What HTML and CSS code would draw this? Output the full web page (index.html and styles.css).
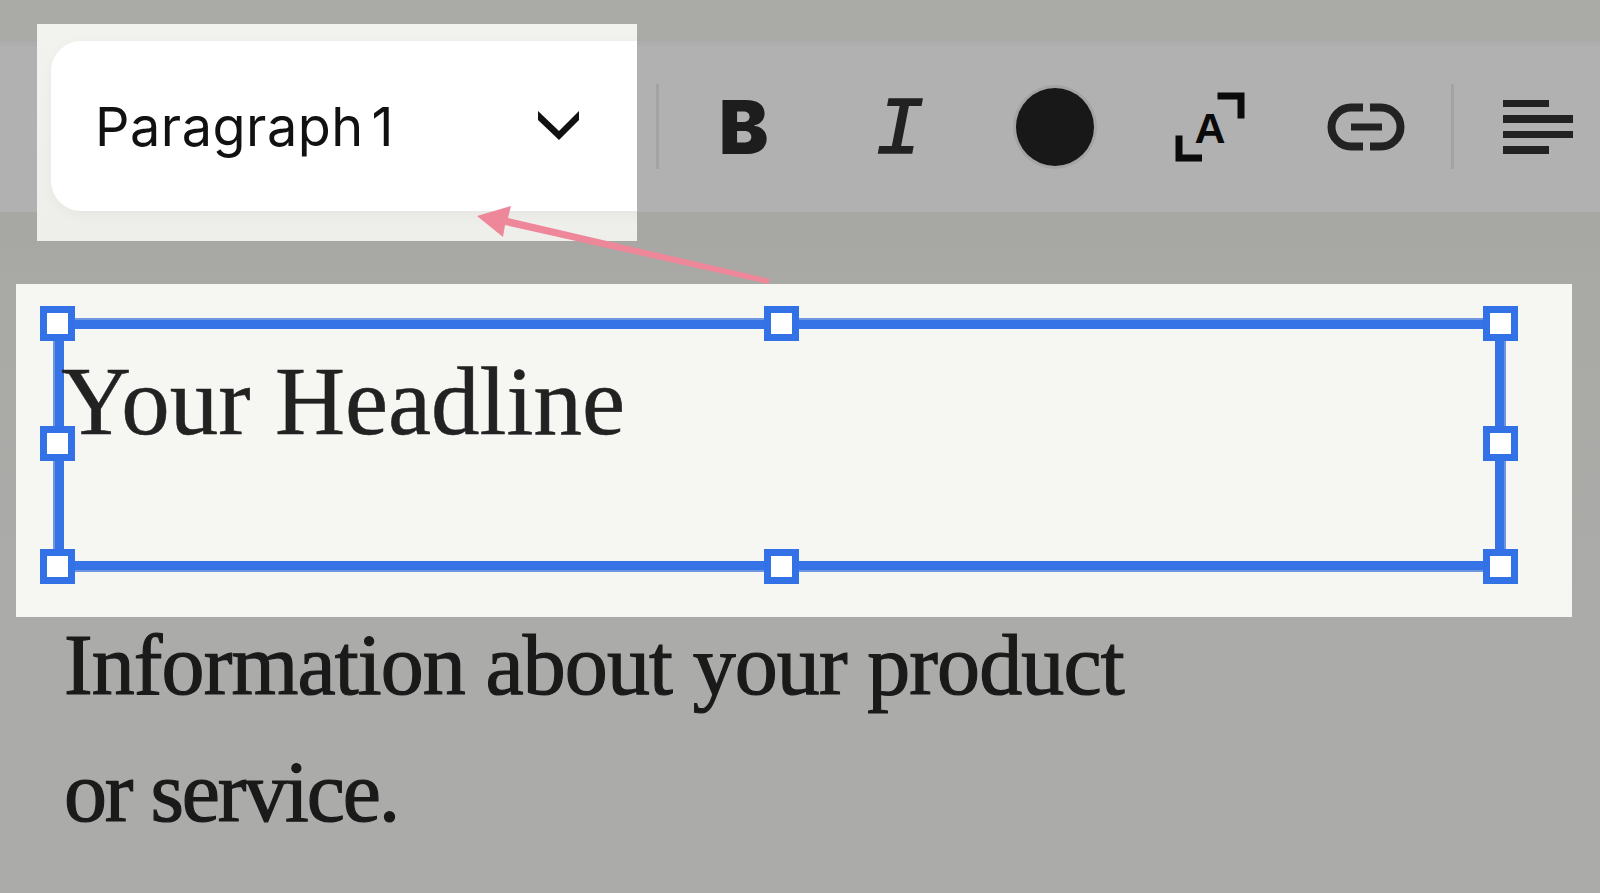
FILE: index.html
```html
<!DOCTYPE html>
<html lang="en">
<head>
    <meta charset="UTF-8">
    <meta name="viewport" content="width=device-width, initial-scale=1.0">
    <title>Text block toolbar</title>
    <link rel="stylesheet" href="styles.css">
</head>
<body>
    <div class="toolbar">
        <span class="divider"></span>
        <div class="tool"><span class="bold-icon">B</span></div>
        <div class="tool"><span class="italic-icon">I</span></div>
        <div class="tool"><span class="color-dot"></span></div>
        <div class="tool">
            <svg class="icon" width="80" height="80" viewBox="0 0 80 80">
                <path d="M47.500 9H71V31.500" fill="none" stroke="#0a0a0a" stroke-width="7"/>
                <path d="M9 48.500V71H32" fill="none" stroke="#0a0a0a" stroke-width="7"/>
                <text class="size-letter" x="40" y="55.500" text-anchor="middle">A</text>
            </svg>
        </div>
        <div class="tool">
            <svg class="icon" width="80" height="50" viewBox="0 0 80 50">
                <path d="M37 5.500H25A19.500 19.500 0 0 0 25 44.500H37" fill="none" stroke="#222" stroke-width="8"/>
                <path d="M44 5.500H55A19.500 19.500 0 0 1 55 44.500H44" fill="none" stroke="#222" stroke-width="8"/>
                <rect x="25" y="21.500" width="31" height="7" fill="#222"/>
            </svg>
        </div>
        <span class="divider"></span>
        <div class="tool">
            <div class="align-icon">
                <span class="short"></span>
                <span></span>
                <span></span>
                <span class="short"></span>
            </div>
        </div>
    </div>

    <div class="spotlight">
        <div class="style-select">
            <span>Paragraph 1</span>
            <svg width="42" height="30" viewBox="0 0 42 30">
                <polygon points="0,0 21,20 41,0 41,9 21,29 0,9" fill="#111"/>
            </svg>
        </div>
    </div>

    <svg class="arrow" width="310" height="90" viewBox="0 0 310 90">
        <polygon points="2,21 36,11 33,23 295,84 293,89 30,30 28,42" fill="#ee8799"/>
    </svg>

    <div class="selected-panel">
        <div class="text-box">
            <h1>Your Headline</h1>
            <span class="handle h-tl"></span>
            <span class="handle h-tc"></span>
            <span class="handle h-tr"></span>
            <span class="handle h-ml"></span>
            <span class="handle h-mr"></span>
            <span class="handle h-bl"></span>
            <span class="handle h-bc"></span>
            <span class="handle h-br"></span>
        </div>
    </div>

    <p class="body-text">Information about your product<br><span class="tight">or service.</span></p>
</body>
</html>
```

FILE: styles.css
```css
body {
    margin: 0;
    padding-top: 41px;
    box-sizing: border-box;
    height: 893px;
    overflow: hidden;
    position: relative;
    background: linear-gradient(#aaaaa6, #a7a7a3 240px, #a9a9a6 284px, #ababa9 620px);
    font-family: "Liberation Serif", serif;
    color: #1a1a1a;
}

.toolbar {
    display: flex;
    align-items: center;
    box-sizing: border-box;
    height: 171px;
    padding: 0 0 5px 656px;
    background: #b1b1b1;
    border-top: 5px solid #adadae;
}

.divider {
    width: 3px;
    height: 85px;
    margin: 0 7px 0 0;
    background: #a3a3a3;
    flex-shrink: 0;
}

.tool + .divider {
    margin-left: 7px;
}

.tool {
    width: 155.500px;
    flex-shrink: 0;
    display: flex;
    justify-content: center;
    align-items: center;
}

.bold-icon {
    font-family: Inter, sans-serif;
    font-weight: 900;
    font-size: 74px;
    line-height: 1;
    color: #1d1d1d;
}

.italic-icon {
    margin-top: 10px;
    font-family: "Liberation Mono", monospace;
    font-style: italic;
    font-size: 82px;
    line-height: 1;
    color: #222;
    -webkit-text-stroke: 1.5px #222;
}

.color-dot {
    width: 78px;
    height: 78px;
    border-radius: 50%;
    background: #171817;
    box-shadow: 0 0 0 3px #a4a4a4;
}

.icon {
    display: block;
}

.size-letter {
    font-family: "Liberation Sans", sans-serif;
    font-weight: bold;
    font-size: 43px;
    fill: #0a0a0a;
}

.align-icon {
    width: 70px;
    display: flex;
    flex-direction: column;
    gap: 8px;
}

.align-icon span {
    height: 7.500px;
    background: #222;
}

.align-icon .short {
    width: 46px;
}

/* highlighted select, sits over the dimmed toolbar */
.spotlight {
    position: absolute;
    left: 37px;
    top: 24px;
    width: 600px;
    height: 217px;
    padding: 17px 0 0 14px;
    box-sizing: border-box;
    overflow: hidden;
    background: linear-gradient(#f2f3ee, #eeeeea);
}

.style-select {
    width: 640px;
    height: 170px;
    padding: 0 111px 0 44px;
    box-sizing: border-box;
    display: flex;
    align-items: center;
    justify-content: space-between;
    background: #fff;
    border-radius: 30px;
    box-shadow: 0 4px 14px rgba(0, 0, 0, 0.04);
    font-family: Inter, sans-serif;
    font-size: 54px;
    letter-spacing: 0.5px;
    word-spacing: -8px;
    color: #111;
}

.arrow {
    position: absolute;
    left: 475px;
    top: 195px;
}

.selected-panel {
    position: absolute;
    left: 16px;
    top: 284px;
    width: 1556px;
    height: 333px;
    padding: 36px 68px 0 39px;
    box-sizing: border-box;
    background: #f6f6f3;
}

.text-box {
    position: relative;
    height: 250px;
    border: 9px solid #3573e6;
    box-shadow: 0 0 0 2px #6f96e0;
    box-sizing: border-box;
}

.text-box h1 {
    margin: 0;
    font-size: 97px;
    font-weight: normal;
    line-height: 110px;
    color: #222;
    position: relative;
    top: 18px;
    left: -3px;
    -webkit-text-stroke: 0.5px #222;
}

.handle {
    position: absolute;
    width: 21px;
    height: 21px;
    background: #fff;
    border: 7px solid #3271e6;
}

.h-tl, .h-tc, .h-tr { top: -23px; }
.h-ml, .h-mr { top: 97px; }
.h-bl, .h-bc, .h-br { top: 220px; }
.h-tl, .h-ml, .h-bl { left: -24px; }
.h-tc, .h-bc { left: 700px; }
.h-tr, .h-mr, .h-br { left: 1419px; }

.body-text {
    position: absolute;
    left: 64px;
    top: 602px;
    margin: 0;
    font-size: 86px;
    line-height: 127px;
    letter-spacing: -0.9px;
    -webkit-text-stroke: 1.2px #1a1a1a;
}

.tight {
    letter-spacing: -2.200px;
}
```
